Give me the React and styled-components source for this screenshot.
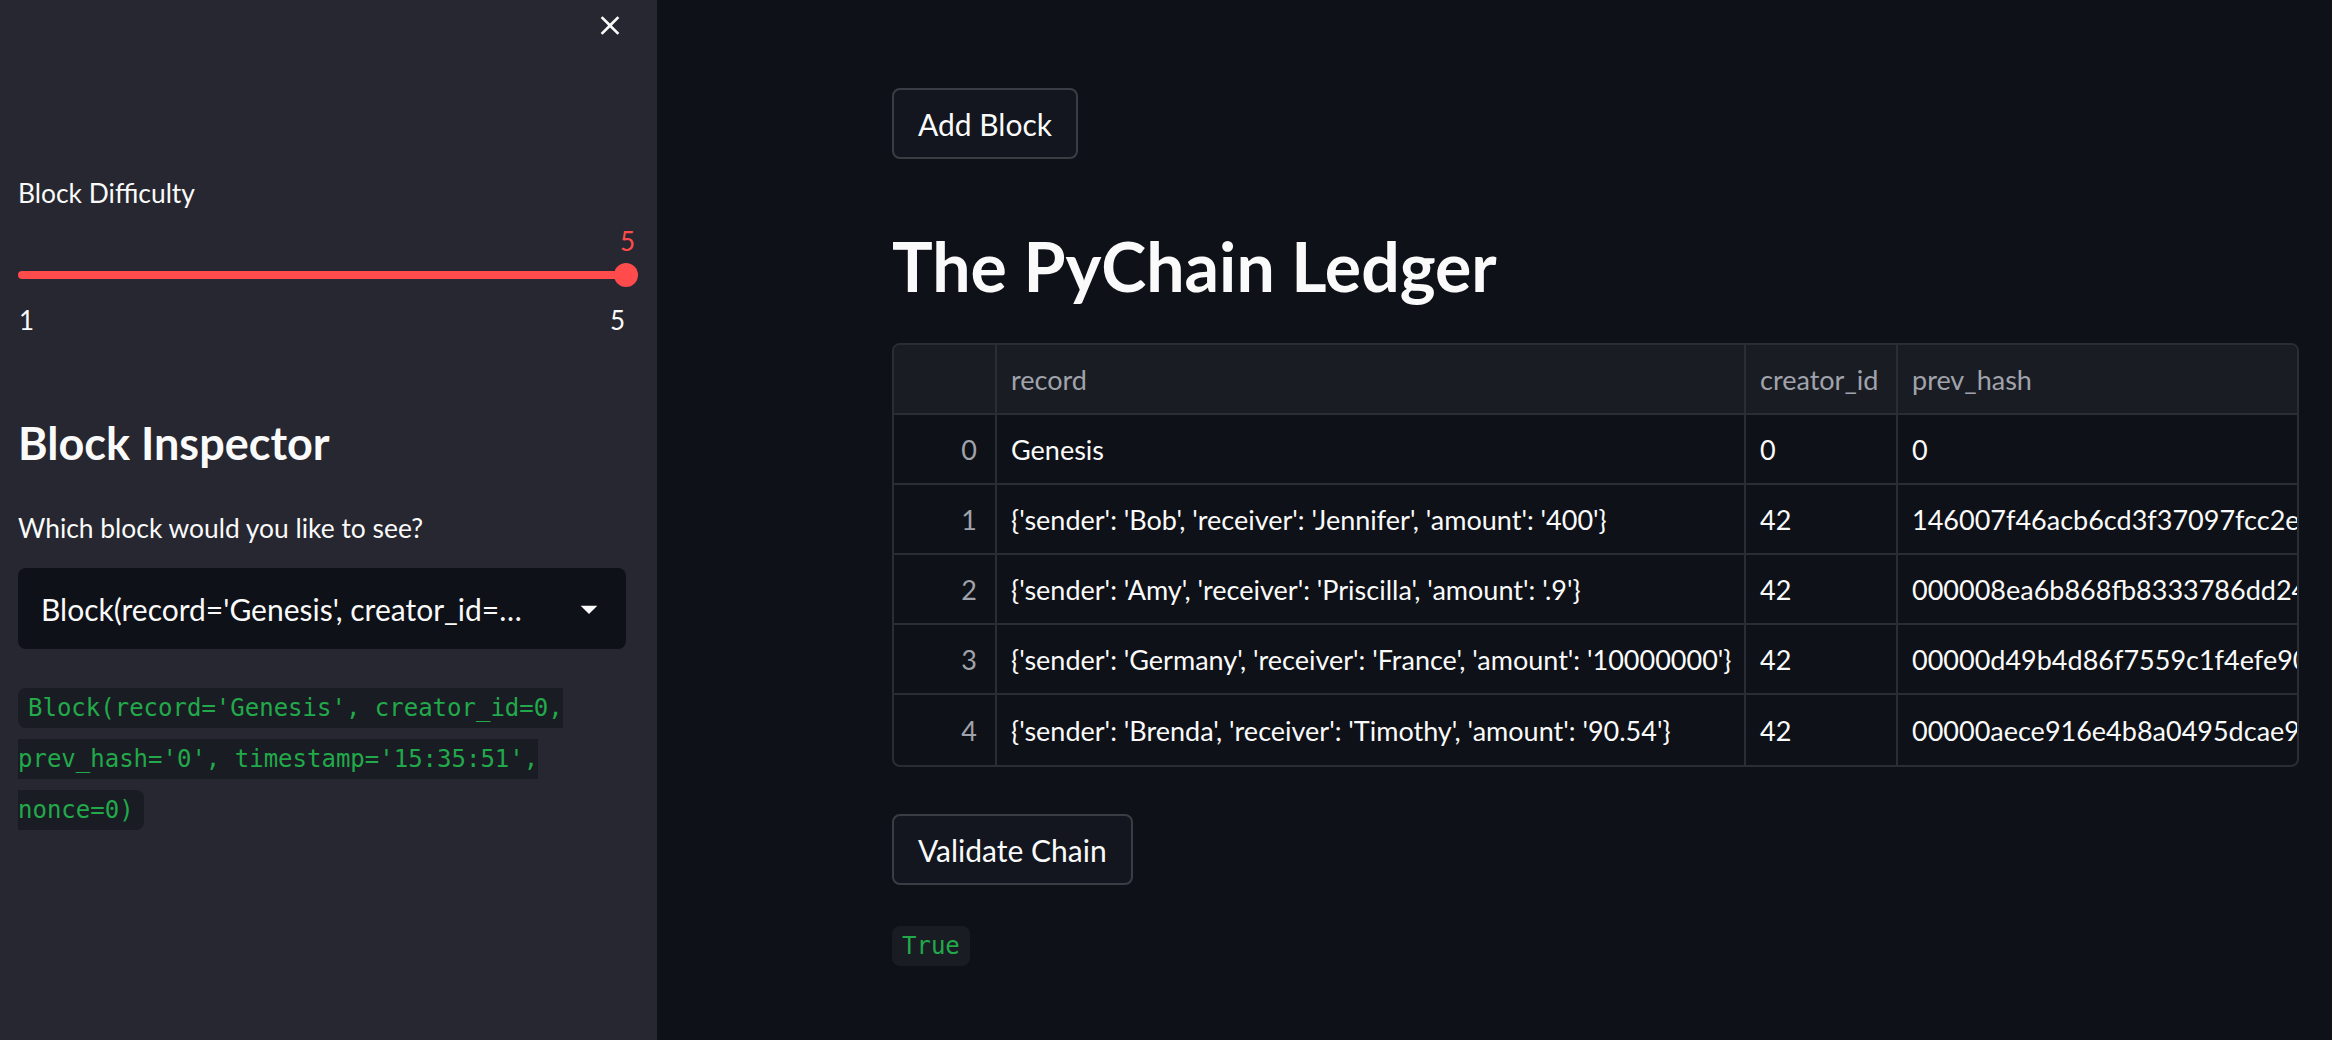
import React from "react";
import styled, { createGlobalStyle } from "styled-components";

const GlobalStyle = createGlobalStyle`
  html, body {
    margin: 0;
    padding: 0;
    background: #0e1117;
  }
  body {
    font-family: Lato, "Open Sans", sans-serif;
    color: #fafafa;
  }
`;

const Shell = styled.div`
  display: flex;
  min-height: 1040px;
`;

const Sidebar = styled.aside`
  width: 657px;
  flex-shrink: 0;
  box-sizing: border-box;
  background: #262730;
  padding: 0 31px 0 18px;
  display: flex;
  flex-direction: column;
`;

const SideHeader = styled.div`
  height: 50px;
  display: flex;
  justify-content: flex-end;
  align-items: center;
`;

const CloseButton = styled.button`
  width: 32px;
  height: 50px;
  padding: 0;
  border: none;
  background: none;
  color: #fafafa;
  display: flex;
  align-items: center;
  justify-content: center;
  cursor: pointer;
`;

const WidgetLabel = styled.div`
  font-size: 26.4px;
  line-height: 40px;
  margin-top: ${(p) => p.top}px;
`;

const Track = styled.div`
  position: relative;
  height: 8px;
  border-radius: 4px;
  background: #ff4b4b;
  margin-top: 58px;
`;

const Thumb = styled.div`
  position: absolute;
  right: -12px;
  top: -8px;
  width: 24px;
  height: 24px;
  border-radius: 50%;
  background: #ff4b4b;
`;

const ThumbValue = styled.div`
  position: absolute;
  bottom: calc(100% + 9px);
  left: 50%;
  transform: translateX(-40%);
  font-size: 26px;
  line-height: 26px;
  color: #ff4b4b;
`;

const Ticks = styled.div`
  display: flex;
  justify-content: space-between;
  font-size: 26px;
  line-height: 40px;
  margin-top: 21px;
  padding: 0 1px 0 1px;
`;

const SideHeading = styled.h2`
  margin: 75px 0 0;
  font-size: 45px;
  line-height: 56px;
  font-weight: 700;
`;

const Select = styled.div`
  margin-top: 20px;
  height: 81px;
  box-sizing: border-box;
  border-radius: 8px;
  background: #0e1117;
  display: flex;
  align-items: center;
  justify-content: space-between;
  padding: 0 17px 0 23px;
  font-size: 30px;
`;

const SelectValue = styled.span`
  white-space: nowrap;
  overflow: hidden;
`;

const Para = styled.p`
  margin: ${(p) => p.top}px 0 0;
  font-size: 32px;
  line-height: 1.6;
`;

const Code = styled.code`
  font-family: "DejaVu Sans Mono", "Liberation Mono", monospace;
  font-size: 24px;
  color: #21a94a;
  background: #1a1c24;
  padding: 6px 10px;
  border-radius: 8px;
`;

const Main = styled.main`
  flex: 1;
  padding: 88px 0 0 235px;
  overflow: hidden;
`;

const Content = styled.div`
  width: 1407px;
  display: flex;
  flex-direction: column;
  align-items: flex-start;
`;

const Button = styled.button`
  height: 71px;
  box-sizing: border-box;
  margin-top: ${(p) => p.top || 0}px;
  padding: 0 24px;
  border: 2px solid #3b3d45;
  border-radius: 8px;
  background: #13161e;
  color: #fafafa;
  font-family: Lato, "Open Sans", sans-serif;
  font-size: 30px;
  cursor: pointer;
`;

const Title = styled.h1`
  margin: 67px 0 0;
  font-size: 68px;
  line-height: 80px;
  font-weight: 700;
`;

const TableFrame = styled.div`
  margin-top: 37px;
  width: 1407px;
  box-sizing: border-box;
  border: 2px solid #2b2d35;
  border-radius: 8px;
  overflow: hidden;
`;

const Grid = styled.div`
  display: grid;
  grid-template-columns: 103px 749px 152px 900px;
  grid-auto-rows: 70px;
`;

const Cell = styled.div`
  box-sizing: border-box;
  display: flex;
  align-items: center;
  justify-content: ${(p) => (p.index ? "flex-end" : "flex-start")};
  padding: ${(p) => (p.index ? "0 18px 0 0" : "0 14px")};
  border-right: ${(p) => (p.last ? "none" : "2px solid #2b2d35")};
  border-bottom: ${(p) => (p.bottom ? "none" : "2px solid #2b2d35")};
  background: ${(p) => (p.head ? "#1a1c24" : "transparent")};
  color: ${(p) => (p.head || p.index ? "#a0a3ab" : "#fafafa")};
  font-size: 27px;
  white-space: nowrap;
  overflow: hidden;
`;

const columns = ["record", "creator_id", "prev_hash"];

const rows = [
  ["Genesis", "0", "0"],
  [
    "{'sender': 'Bob', 'receiver': 'Jennifer', 'amount': '400'}",
    "42",
    "146007f46acb6cd3f37097fcc2e08b7d2c41e9a06f53b8d1c2e7a49f0d36b5e1",
  ],
  [
    "{'sender': 'Amy', 'receiver': 'Priscilla', 'amount': '.9'}",
    "42",
    "000008ea6b868fb8333786dd245bc19e4a7f2d06b83c5e91a4d7f20c6b3e8a15",
  ],
  [
    "{'sender': 'Germany', 'receiver': 'France', 'amount': '10000000'}",
    "42",
    "00000d49b4d86f7559c1f4efe90da3b17c82e4f6d095a1b3c7e28f4d60a9b5c2",
  ],
  [
    "{'sender': 'Brenda', 'receiver': 'Timothy', 'amount': '90.54'}",
    "42",
    "00000aece916e4b8a0495dcae98cf3b27d16e0a4c85b9f2e71d3a6c04b8e5f97",
  ],
];

function CloseIcon() {
  return (
    <svg width="39" height="39" viewBox="0 0 24 24" fill="currentColor">
      <path d="M19 6.41L17.59 5 12 10.59 6.41 5 5 6.41 10.59 12 5 17.59 6.41 19 12 13.41 17.59 19 19 17.59 13.41 12z" />
    </svg>
  );
}

function Caret() {
  return (
    <svg width="40" height="40" viewBox="0 0 24 24" fill="#fafafa">
      <path d="M7 10l5 5 5-5z" />
    </svg>
  );
}

function Ledger() {
  const last = rows.length - 1;
  return (
    <TableFrame>
      <Grid>
        <Cell head index />
        {columns.map((c, i) => (
          <Cell head key={c} last={i === columns.length - 1}>
            {c}
          </Cell>
        ))}
        {rows.map((r, ri) => (
          <React.Fragment key={ri}>
            <Cell index bottom={ri === last}>
              {ri}
            </Cell>
            {r.map((v, ci) => (
              <Cell key={ci} bottom={ri === last} last={ci === r.length - 1}>
                {v}
              </Cell>
            ))}
          </React.Fragment>
        ))}
      </Grid>
    </TableFrame>
  );
}

export default function App() {
  return (
    <>
      <GlobalStyle />
      <Shell>
        <Sidebar>
          <SideHeader>
            <CloseButton>
              <CloseIcon />
            </CloseButton>
          </SideHeader>
          <WidgetLabel top={123}>Block Difficulty</WidgetLabel>
          <Track>
            <Thumb>
              <ThumbValue>5</ThumbValue>
            </Thumb>
          </Track>
          <Ticks>
            <span>1</span>
            <span>5</span>
          </Ticks>
          <SideHeading>Block Inspector</SideHeading>
          <WidgetLabel top={37}>Which block would you like to see?</WidgetLabel>
          <Select>
            <SelectValue>Block(record='Genesis', creator_id=…</SelectValue>
            <Caret />
          </Select>
          <Para top={29}>
            <Code>
              Block(record='Genesis', creator_id=0, prev_hash='0',
              timestamp='15:35:51', nonce=0)
            </Code>
          </Para>
        </Sidebar>
        <Main>
          <Content>
            <Button>Add Block</Button>
            <Title>The PyChain Ledger</Title>
            <Ledger />
            <Button top={47}>Validate Chain</Button>
            <Para top={31}>
              <Code>True</Code>
            </Para>
          </Content>
        </Main>
      </Shell>
    </>
  );
}
